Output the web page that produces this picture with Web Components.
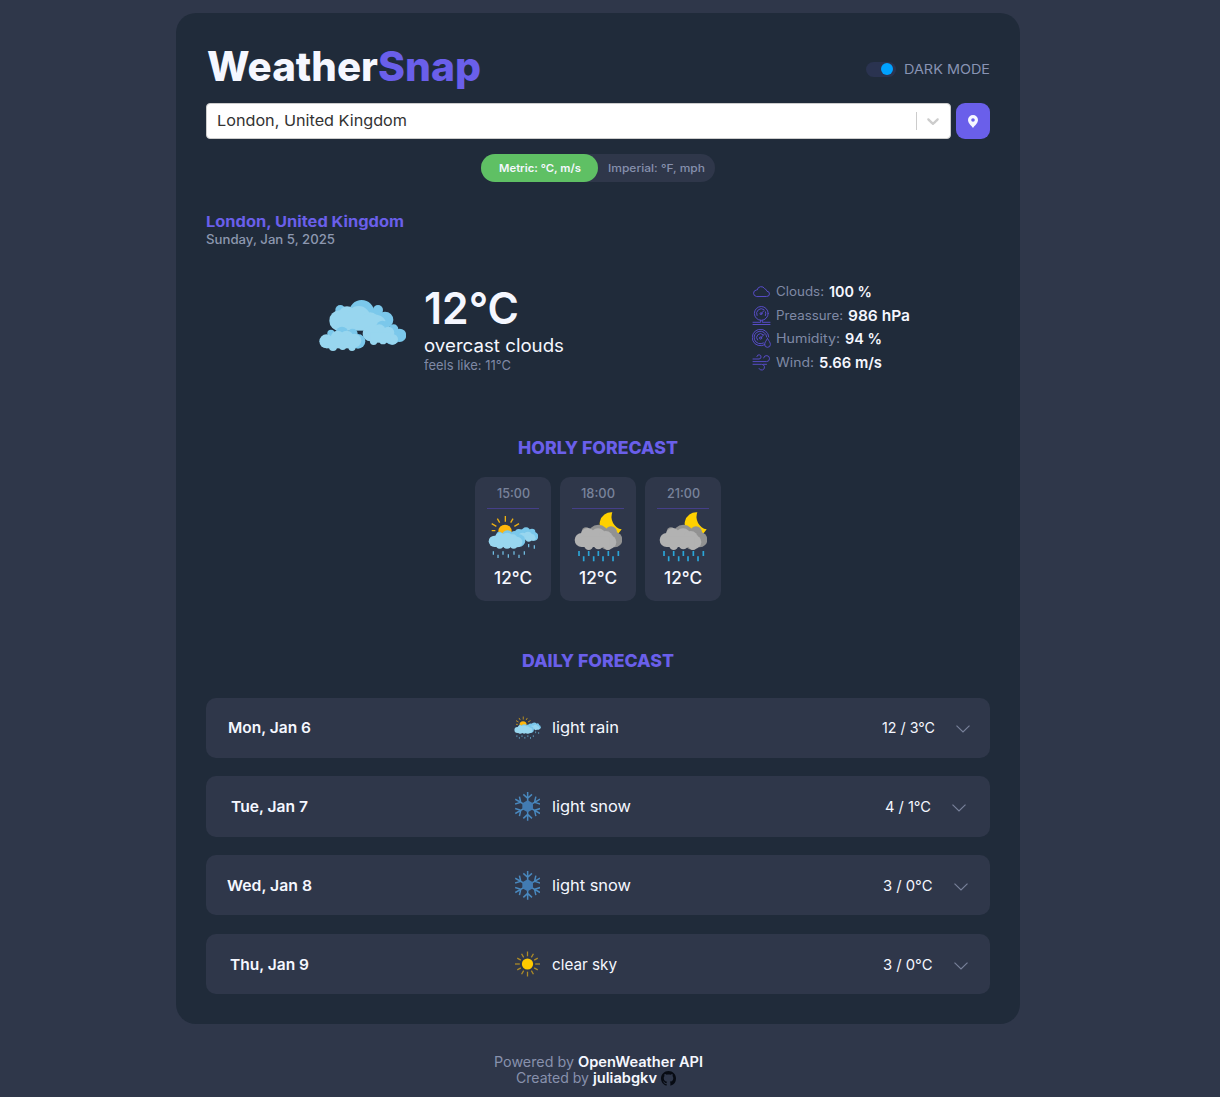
<!DOCTYPE html>
<html lang="en">
<head>
<meta charset="utf-8">
<title>WeatherSnap</title>
<style>
:root{--page:#2f374a;--card:#202b3a;--purple:#6a5fea;--light:#f5f7ff;--muted:#8690ad;--dim:#79839b}
body{margin:0;background:var(--page);color:var(--light);font-family:Inter,"Open Sans",sans-serif;height:1097px;overflow:hidden}
</style>
</head>
<body>
<weather-app></weather-app>
<script>
const define=(name,html,setup)=>customElements.define(name,class extends HTMLElement{
  connectedCallback(){
    if(this.shadowRoot)return;
    const root=this.attachShadow({mode:'open'});
    root.innerHTML=typeof html==='function'?html(this):html;
    if(setup)setup(this,root);
  }
});

/* text run stretched to an exact advance width */
define('fit-text',`<style>:host{display:inline-block;white-space:nowrap;flex:none}span{display:inline-block;transform-origin:0 50%}</style><span><slot></slot></span>`,
(el,root)=>{
  const s=root.querySelector('span'),w=parseFloat(el.getAttribute('w'));
  const n=s.getBoundingClientRect().width;
  el.style.width=w+'px';
  if(n)s.style.transform='scaleX('+(w/n)+')';
});

const circles=(fill,list)=>`<g fill="${fill}">`+list.map(c=>`<circle cx="${c[0]}" cy="${c[1]}" r="${c[2]}"/>`).join('')+'</g>';
const box=(fill,x,y,w,h)=>`<rect x="${x}" y="${y}" width="${w}" height="${h}" fill="${fill}"/>`;
const drops=(list,len)=>list.map(d=>`M${d[0]} ${d[1]}v${len}`).join('');
const DARK='#7bc8eb',LITE='#98d6ef';
const icons={
 overcast:['26 60 262 153',
  circles(DARK,[[154,98,38],[203,90,15],[224,120,25],[190,125,36],[90,90,15]])+
  circles(LITE,[[88,122,31],[110,104,25],[145,113,35],[180,123,26],[100,135,22]])+
  box(LITE,88,110,100,42)+
  `<path fill="${LITE}" d="M160 105Q215 95 226 123L190 140H100z"/>`+
  circles(DARK,[[216,140,18],[250,147,14],[268,166,20],[245,168,26]])+
  circles(LITE,[[180,161,23],[207,152,19],[234,158,18],[215,168,18],[190,184,11],[218,182,11],[247,178,16]])+
  box(LITE,180,158,62,30)+
  circles(DARK,[[62,160,11],[95,159,19],[127,161,15],[143,184,22]])+
  circles(LITE,[[48,184,21],[82,172,20],[109,173,21],[132,182,21],[68,201,12],[97,199,11],[125,202,11]])+
  box(LITE,48,176,84,29)+
  '<circle cx="147" cy="159" r="3.5" fill="#202b3a"/>'],
 sunrain:['68 256 152 130',
  '<path stroke="#eeb012" stroke-width="4" d="M120 259v17M96 267l7 12M143 267l-7 12M79 282l14 8M161 282l-14 8M79 303h11"/><circle cx="119" cy="305" r="20" fill="#ffb60a"/>'+
  circles(DARK,[[160,309,11],[182,307,14],[200,307,10],[206,320,13],[170,315,16]])+
  circles(LITE,[[172,321,12],[188,318,12],[199,323,10],[190,327,9],[204,326,7]])+
  circles(DARK,[[102,315,9],[126,319,17],[148,316,12],[161,333,19]])+
  circles(LITE,[[87,335,17],[104,325,16],[125,326,17],[142,329,15],[155,337,16],[103,346,11],[125,345,12],[145,346,11]])+
  box(LITE,87,328,66,24)+
  `<path stroke="#73bfe5" stroke-width="3.8" d="${drops([[84,365],[98,375],[113,365],[129,374],[146,365],[161,375],[177,365],[190,343],[207,347]],10)}"/>`],
 nightrain:['326 246 146 150',
  '<path fill="#ffd000" d="M441 247A35 35 0 1 0 469 298A38 38 0 0 1 441 247z"/>'+
  circles('#929292',[[362,305,13],[399,315,31],[437,307,18],[448,329,23],[425,335,24]])+
  circles('#b2b2b2',[[349,330,21],[367,315,21],[398,318,23],[421,325,22],[433,336,20],[370,347,13],[399,344,14],[428,347,13]])+
  box('#b2b2b2',349,320,84,31)+
  `<path stroke="#2ba6d8" stroke-width="5" d="${drops([[341,363],[370,363],[399,363],[429,363],[459,363],[355,379],[385,379],[413,379],[443,379]],15)}"/>`],
 snow:['-38 -43 76 86',
  '<g stroke="#4988be" stroke-width="4.5" fill="none">'+[0,60,120,180,240,300].map(a=>`<path transform="rotate(${a})" d="M0 0V-43M-13 -36L0 -24L13 -36"/>`).join('')+'</g><path fill="#427bb2" d="M0-18L16-9V9L0 18L-16 9V-9z"/>'],
 sun:['-39 -39 78 78',
  '<g stroke="#ad8b28" stroke-width="4">'+Array.from({length:12},(_,i)=>`<path transform="rotate(${i*30})" d="M0-24V${i%3?-37:-39}"/>`).join('')+'</g><circle r="17.5" fill="#ffc900"/>'],
 chevron:['0 0 14 8','<path fill="none" stroke="#78819a" stroke-width="1.2" d="M.5 .6L7 7L13.5 .6"/>'],
 caret:['0 0 20 20','<path fill="#ccc" d="M4.516 7.548c.436-.446 1.043-.481 1.576 0L10 11.295l3.908-3.747c.533-.481 1.141-.446 1.574 0 .436.445.408 1.197 0 1.615-.406.418-4.695 4.502-4.695 4.502a1.095 1.095 0 0 1-1.576 0S4.924 9.581 4.516 9.163c-.409-.418-.436-1.17 0-1.615z"/>'],
 pin:['0 0 10 13','<path fill="#f5f7ff" fill-rule="evenodd" d="M5 0a5 5 0 0 1 5 5c0 3-3.200 5.500-5 8C3.200 10.500 0 8 0 5a5 5 0 0 1 5-5zm0 3.200a1.800 1.800 0 1 0 0 3.600a1.800 1.800 0 0 0 0-3.600z"/>'],
 cloudline:['0 0 19 19','<path d="M4.300 14.500a3.300 3.300 0 0 1 0-6.500h.9a4 4 0 0 1 7.500-1.200A3.300 3.300 0 0 1 15 9.300a2.600 2.600 0 0 1-.3 5.200z"/>'],
 gauge:['0 0 19 19','<circle cx="9.300" cy="7.400" r="6.900"/><path d="M5 9.500a4.800 4.800 0 0 1 7-6M13.500 5.800a4.800 4.800 0 0 1-.1 3.800M12 4.600L9.400 7.300M8.600 14.300v2H1M10.300 14.300v2H18M1 18.500h17"/><circle cx="9" cy="7.700" r="1"/>'],
 humid:['0 0 19 19','<path d="M13 15.500A8.300 8.300 0 1 1 16.800 8M11.500 14A6.300 6.300 0 1 1 14.700 8M5.500 11a3.900 3.900 0 0 1 5.700-5.300M12 5.500L8.800 8.800"/><circle cx="8.600" cy="9" r="1.100"/><path d="M15.500 9.500c1.600 2.700 2.900 4.200 2.900 5.900a2.900 2.900 0 0 1-5.800 0c0-1.700 1.300-3.200 2.900-5.900z"/>'],
 wind:['0 0 19 19','<path d="M1 6h6a2.100 2.100 0 1 0-2.100-2.500M1 8.600h13.600a3 3 0 1 0-3-3.700M1 11.300h8.500a2.900 2.900 0 1 1-2.500 4.200M11.500 11.300h3"/>'],
 github:['0 0 16 16','<path fill="#070b13" d="M8 0C3.580 0 0 3.580 0 8c0 3.540 2.290 6.530 5.470 7.590.4.070.55-.17.55-.38 0-.19-.01-.82-.01-1.490-2.010.37-2.530-.49-2.690-.94-.09-.23-.48-.94-.82-1.130-.28-.15-.68-.52-.01-.53.63-.01 1.080.58 1.230.82.72 1.210 1.870.87 2.330.66.07-.52.28-.87.51-1.070-1.780-.2-3.640-.89-3.640-3.950 0-.87.31-1.590.82-2.150-.08-.2-.36-1.020.08-2.120 0 0 .67-.21 2.200.82.64-.18 1.320-.27 2-.27s1.360.09 2 .27c1.530-1.040 2.200-.82 2.200-.82.44 1.100.16 1.920.08 2.120.51.56.82 1.270.82 2.150 0 3.070-1.870 3.750-3.650 3.950.29.25.54.73.54 1.480 0 1.070-.01 1.930-.01 2.200 0 .21.15.46.55.38A8.010 8.010 0 0 0 16 8c0-4.420-3.580-8-8-8z"/>']
};
define('w-icon',el=>{
  const n=el.getAttribute('name'),[view,body]=icons[n],line=['cloudline','gauge','humid','wind'].includes(n);
  return `<style>:host{display:block;flex:none;width:${el.getAttribute('w')}px;height:${el.getAttribute('h')}px}svg{display:block;width:100%;height:100%}</style>
  <svg viewBox="${view}" ${line?'fill="none" stroke="#574cc6" stroke-width="1" stroke-linecap="round" stroke-linejoin="round"':''}>${body}</svg>`;
});

define('app-header',`<style>
:host{display:flex;justify-content:space-between;height:90px;width:784px}
h1{margin:22px 0 0 1px;font:800 40.500px/64px Inter,sans-serif;display:flex}
h1 .p{color:var(--purple)}
.mode{display:flex;align-items:center;gap:8px;height:20px;margin-top:46px;font-size:13px;line-height:20px;color:#8893b3}
.sw{width:30px;height:15px;border-radius:8px;background:#2a3350;display:flex;align-items:center;justify-content:flex-end;padding-right:3px;box-sizing:border-box}
.sw i{width:12px;height:12px;border-radius:50%;background:#00a2ff}
</style>
<h1><fit-text w="171">Weather</fit-text><fit-text class="p" w="103">Snap</fit-text></h1>
<div class="mode"><span class="sw"><i></i></span><fit-text w="86">DARK MODE</fit-text></div>`);

define('search-bar',`<style>
:host{display:flex;gap:5px;height:36px}
.f{flex:1;display:flex;align-items:center;box-sizing:border-box;background:#fff;border:1px solid #ccc;border-radius:4px;padding:0 7px 0 10px;color:#333;font-size:15px;line-height:34px;font-weight:400}
fit-text{margin-right:auto}
.bar{width:1px;height:18px;background:#ccc;margin-right:6px}
button{width:34px;height:36px;border:0;border-radius:9px;background:var(--purple);padding:0;display:flex;align-items:center;justify-content:center}
</style>
<div class="f"><fit-text w="190">London, United Kingdom</fit-text><span class="bar"></span><w-icon name="caret" w="20" h="20"></w-icon></div>
<button aria-label="Use my location"><w-icon name="pin" w="10" h="13"></w-icon></button>`);

define('unit-toggle',`<style>
:host{display:flex;width:234px;height:28px;border-radius:14px;background:var(--page);margin:15px auto 0 275px;font-size:11px;line-height:28px}
div{flex:1;display:flex;justify-content:center}
.on{background:#5fc064;border-radius:14px;font-weight:600}
.off{color:var(--muted);font-weight:500}
</style><div class="on"><fit-text w="82">Metric: °C, m/s</fit-text></div><div class="off"><fit-text w="97">Imperial: °F, mph</fit-text></div>`);

define('place-title',`<style>
:host{display:flex;flex-direction:column;margin-top:31px}
.c{font-size:15px;font-weight:700;line-height:18px;color:var(--purple)}
.d{font-size:12.500px;font-weight:500;line-height:17px;color:#8d98b0}
</style><fit-text class="c" w="198">London, United Kingdom</fit-text><fit-text class="d" w="129">Sunday, Jan 5, 2025</fit-text>`);

define('metric-row',el=>`<style>
:host{display:flex;align-items:center;height:23.700px;font-size:12.700px;color:#7f89a5}
.l{margin-left:5px}b{font-weight:600;font-size:15px;color:var(--light);margin-left:5px}
</style><w-icon name="${el.getAttribute('icon')}" w="19" h="19"></w-icon>
<fit-text class="l" w="${el.getAttribute('lw')}">${el.getAttribute('label')}</fit-text><b><slot></slot></b>`);

define('current-weather',`<style>
:host{display:flex;margin:31px 0 0 113px;height:97px}
.t{display:flex;flex-direction:column;margin-left:18px;width:328px;padding-top:3px}
.deg{font-size:44px;font-weight:600;line-height:53px}
.desc{font-size:18px;line-height:22px;font-weight:400}
.feel{font-size:13px;line-height:17px;color:#7f89a5}
.m{display:flex;flex-direction:column;padding-top:.6px}
w-icon{margin-top:21px}
</style><w-icon name="overcast" w="87.300" h="51"></w-icon>
<div class="t"><fit-text class="deg" w="95">12°C</fit-text><fit-text class="desc" w="140">overcast clouds</fit-text><fit-text class="feel" w="87">feels like: 11°C</fit-text></div>
<div class="m">
<metric-row icon="cloudline" label="Clouds:" lw="48"><fit-text w="43">100 %</fit-text></metric-row>
<metric-row icon="gauge" label="Preassure:" lw="67"><fit-text w="62">986 hPa</fit-text></metric-row>
<metric-row icon="humid" label="Humidity:" lw="64"><fit-text w="37">94 %</fit-text></metric-row>
<metric-row icon="wind" label="Wind:" lw="38"><fit-text w="63">5.66 m/s</fit-text></metric-row>
</div>`);

define('section-title',`<style>:host{display:flex;justify-content:center;height:28px;font:800 18px/28px Inter,sans-serif;color:var(--purple)}</style><slot></slot>`);

define('hour-tile',el=>`<style>
:host{display:flex;flex-direction:column;align-items:center;box-sizing:border-box;width:76px;height:124px;border-radius:10px;background:var(--page);padding-top:7px}
.time{font-size:12.700px;line-height:20px;color:var(--dim);font-weight:500}
hr{width:52px;height:1px;border:0;margin:4px 0 1px;background:#453f89}
.pic{height:53px;display:flex;align-items:center;justify-content:center}
.deg{font-size:17px;font-weight:500;line-height:24px;margin-top:3px}
</style><fit-text class="time" w="${el.getAttribute('tw')}">${el.getAttribute('time')}</fit-text><hr>
<div class="pic">${el.getAttribute('icon')==='sunrain'?'<w-icon name="sunrain" w="50.700" h="43.300"></w-icon>':'<w-icon name="nightrain" w="48.700" h="50"></w-icon>'}</div>
<fit-text class="deg" w="38">12°C</fit-text>`);

define('hourly-forecast',`<style>:host{display:flex;gap:9px;margin:15px 0 0 269px}</style>
<hour-tile time="15:00" tw="33" icon="sunrain"></hour-tile><hour-tile time="18:00" tw="34" icon="nightrain"></hour-tile><hour-tile time="21:00" tw="33" icon="nightrain"></hour-tile>`);

define('day-row',el=>{const a=n=>el.getAttribute(n);return `<style>
:host{display:grid;grid-template-columns:126px 1fr 128px;align-items:center;height:60.300px;border-radius:10px;background:var(--page);font-size:15px;line-height:25px}
.date,.temp{display:flex;justify-content:center;align-items:center}
.date{font-weight:600}
.mid{display:flex;align-items:center;padding-left:182px}
.pic{width:27px;display:flex;justify-content:center;margin:0 10.500px 0 0}
.temp{gap:21px;padding-right:1px}.temp w-icon{margin-top:3px}
</style><div class="date"><fit-text w="${a('dw')}">${a('date')}</fit-text></div>
<div class="mid"><span class="pic"><w-icon name="${a('icon')}" w="${a('iw')}" h="${a('ih')}"></w-icon></span><fit-text w="${a('sw')}">${a('desc')}</fit-text></div>
<div class="temp"><fit-text w="${a('tw')}">${a('temp')}</fit-text><w-icon name="chevron" w="14" h="8"></w-icon></div>`});

define('daily-forecast',`<style>:host{display:flex;flex-direction:column;gap:18.500px;margin-top:22.500px}</style>
<day-row date="Mon, Jan 6" dw="83" icon="sunrain" iw="27" ih="23" desc="light rain" sw="67" temp="12 / 3°C" tw="53"></day-row>
<day-row date="Tue, Jan 7" dw="77" icon="snow" iw="25.300" ih="28.700" desc="light snow" sw="79" temp="4 / 1°C" tw="46"></day-row>
<day-row date="Wed, Jan 8" dw="85" icon="snow" iw="25.300" ih="28.700" desc="light snow" sw="79" temp="3 / 0°C" tw="49.500"></day-row>
<day-row date="Thu, Jan 9" dw="79" icon="sun" iw="25" ih="26" desc="clear sky" sw="65" temp="3 / 0°C" tw="49.500"></day-row>`);

define('app-footer',`<style>
:host{display:flex;flex-direction:column;align-items:center;margin:30px 24px 0 0;font-size:14px;line-height:16px;color:#8891ad}
div{display:flex;gap:4px;align-items:center;height:16px}b{font-weight:600;color:var(--light)}
div+div{margin-right:4px}
</style><div><fit-text w="80">Powered by</fit-text><b><fit-text w="125">OpenWeather API</fit-text></b></div>
<div><fit-text w="73">Created by</fit-text><b><fit-text w="64">juliabgkv</fit-text></b><w-icon name="github" w="15" h="15"></w-icon></div>`);

define('weather-app',`<style>
:host{display:block;padding-top:13px}
main{box-sizing:border-box;width:844px;height:1011px;margin-left:176px;padding:0 30px;border-radius:20px;background:var(--card);display:flex;flex-direction:column}
.h{margin-top:58px}.d{margin-top:46px}
</style><main>
<app-header></app-header><search-bar></search-bar><unit-toggle></unit-toggle><place-title></place-title><current-weather></current-weather>
<section-title class="h"><fit-text w="160">HORLY FORECAST</fit-text></section-title>
<hourly-forecast></hourly-forecast>
<section-title class="d"><fit-text w="152">DAILY FORECAST</fit-text></section-title>
<daily-forecast></daily-forecast>
</main><app-footer></app-footer>`);
</script>
</body>
</html>
